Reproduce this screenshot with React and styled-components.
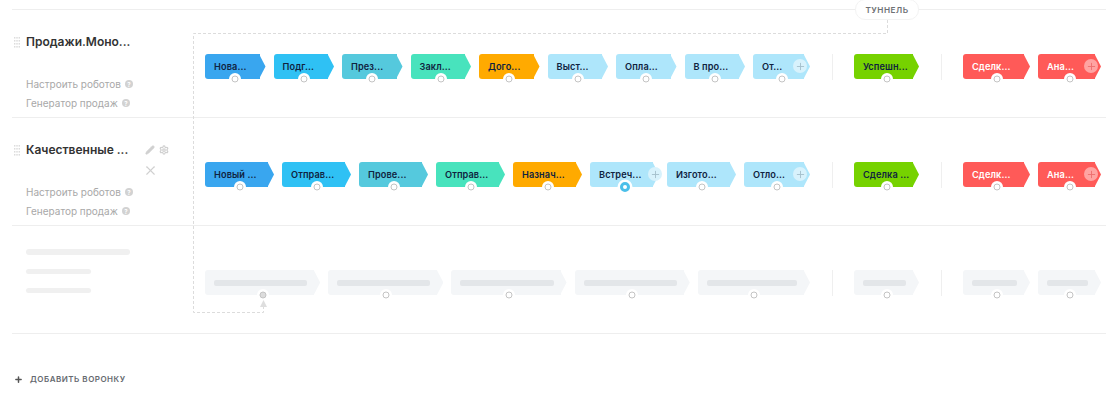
import React from 'react'
import styled, { createGlobalStyle } from 'styled-components'
import { Pencil, Plus, Settings, X } from 'lucide-react'

const GlobalStyle = createGlobalStyle`
  html, body {
    margin: 0;
    background: #fff;
    font-family: Inter, "Noto Sans", sans-serif;
  }
`

const colors = {
  blue: '#39a6ef',
  sky: '#2fc1f4',
  teal: '#55c9dd',
  mint: '#48e3bd',
  orange: '#ffaa00',
  light: '#aee6fb',
  green: '#76d200',
  red: '#ff5a58',
  ghost: '#f4f6f8'
}

const firstFunnel = {
  title: 'Продажи.Моно...',
  chipWidth: 60.5,
  stages: [
    { name: 'Нова...', color: 'blue' },
    { name: 'Подг...', color: 'sky' },
    { name: 'През...', color: 'teal' },
    { name: 'Закл...', color: 'mint' },
    { name: 'Дого...', color: 'orange' },
    { name: 'Выст...', color: 'light' },
    { name: 'Опла...', color: 'light' },
    { name: 'В про...', color: 'light' },
    { name: 'От...', color: 'light', plus: 10 }
  ],
  won: 'Успешн...',
  lost: ['Сделк...', 'Ана...']
}

const secondFunnel = {
  title: 'Качественные ...',
  editable: true,
  chipWidth: 69,
  stages: [
    { name: 'Новый ...', color: 'blue' },
    { name: 'Отправ...', color: 'sky' },
    { name: 'Прове...', color: 'teal' },
    { name: 'Отправ...', color: 'mint' },
    { name: 'Назнач...', color: 'orange' },
    { name: 'Встреч...', color: 'light', plus: 4, active: true },
    { name: 'Изгото...', color: 'light' },
    { name: 'Отло...', color: 'light', plus: 10 }
  ],
  won: 'Сделка ...',
  lost: ['Сделк...', 'Ана...']
}

const Page = styled.div`
  position: relative;
  width: 1110px;
  height: 402px;
  overflow: hidden;
  box-sizing: border-box;
  padding: 9px 4px 0 12px;
`

const Board = styled.div`
  border-top: 1px solid #eeeeee;
`

const Row = styled.div`
  display: flex;
  height: 107px;
  border-bottom: 1px solid #eeeeee;
`

const Sidebar = styled.div`
  width: 181px;
  flex-shrink: 0;
  box-sizing: border-box;
  padding: 24px 0 0 2px;
`

const Head = styled.div`
  display: flex;
  height: 40px;
`

const Title = styled.div`
  width: 117px;
  margin-left: 6px;
  flex-shrink: 0;
  font-size: 12px;
  line-height: 16px;
  font-weight: 600;
  color: #333;
  white-space: nowrap;
`

const Actions = styled.div`
  display: grid;
  grid-template-columns: 10px 10px;
  grid-template-rows: 10px 10px;
  gap: 11px 4px;
  margin: 3px 0 0 2px;
  color: #d0d0d0;
`

const CloseIcon = styled(X)`
  margin: -3px 0 0 -2px;
`

const Links = styled.div`
  padding-left: 12px;
`

const LinkRow = styled.div`
  display: flex;
  align-items: center;
  gap: 4px;
  height: 19px;
  font-size: 10px;
  color: #a8a8a8;
`

const Help = styled.span`
  display: flex;
  align-items: center;
  justify-content: center;
  width: 8px;
  height: 8px;
  margin-top: 1px;
  border-radius: 50%;
  background: #d2d2d2;
  color: #fff;
  font-size: 6px;
  font-weight: 700;
`

const Stages = styled.div`
  flex: 1;
  display: flex;
  box-sizing: border-box;
  padding: 44px 5px 0 12px;
`

const Group = styled.div`
  display: flex;
  gap: 8px;
  height: 25px;
  width: ${p => p.$width}px;
  flex-shrink: 0;
`

const Divider = styled.div`
  width: 1px;
  height: 26px;
  margin: 0 21px 0 22px;
  flex-shrink: 0;
  background: #efefef;
`

const Chip = styled.div`
  position: relative;
  box-sizing: border-box;
  flex: 0 0 ${p => p.$width}px;
  min-width: 0;
  display: flex;
  align-items: center;
  padding-left: 9px;
  font-size: 9.2px;
  font-weight: 600;
  letter-spacing: 0.1px;
  color: ${p => (p.$color === 'red' ? '#fff' : '#10233f')};
  white-space: nowrap;

  &:last-child {
    flex: 1 1 0;
  }

  &::before {
    content: '';
    position: absolute;
    inset: 0 6px 0 0;
    border-radius: 3px 0 0 3px;
    background: ${p => colors[p.$color]};
  }

  &::after {
    content: '';
    position: absolute;
    top: 0;
    bottom: 0;
    right: 0;
    width: 6.5px;
    background: ${p => colors[p.$color]};
    clip-path: polygon(0 0, 100% 50%, 0 100%);
  }
`

const ChipName = styled.span`
  position: relative;
  z-index: 1;
`

const Dot = styled.span`
  position: absolute;
  z-index: 2;
  left: 50%;
  bottom: 0;
  width: ${p => (p.$active ? 10 : 7)}px;
  height: ${p => (p.$active ? 10 : 7)}px;
  box-sizing: border-box;
  transform: translate(-50%, 50%);
  border-radius: 50%;
  border: ${p => (p.$active ? '3px solid #4bbfe9' : '1px solid #c4c4c4')};
  background: ${p => (p.$filled ? '#dcdcdc' : '#fff')};
  box-shadow: 0 0 0 2.5px #fff;
`

const AddStage = styled.span`
  position: absolute;
  z-index: 2;
  top: 5px;
  right: ${p => p.$right - 7}px;
  width: 14px;
  height: 14px;
  display: flex;
  align-items: center;
  justify-content: center;
  border-radius: 50%;
  background: ${p => (p.$red ? '#ffa3a2' : '#d8f2fc')};
  color: ${p => (p.$red ? '#ee6f6f' : '#a4bfcc')};
`

const GhostBar = styled.span`
  position: relative;
  z-index: 1;
  flex: 1;
  height: 6px;
  margin-right: 13px;
  border-radius: 2px;
  background: #e3e6e9;
`

const SideBar = styled.div`
  width: ${p => p.$width}px;
  height: ${p => (p.$wide ? 6 : 5)}px;
  margin: 0 0 14px 12px;
  border-radius: 3px;
  background: #f0f0f0;
`

const GhostSide = styled(Sidebar)`
  padding-top: 23px;
`

const AddFunnel = styled.div`
  display: flex;
  align-items: center;
  gap: 7px;
  margin: 39px 0 0 2px;
  height: 12px;
  font-size: 8px;
  font-weight: 600;
  letter-spacing: 0.5px;
  color: #666a70;
`

const TunnelLine = styled.svg`
  position: absolute;
  left: 0;
  top: 0;
  z-index: 3;
  pointer-events: none;
`

const TunnelBadge = styled.div`
  position: absolute;
  z-index: 4;
  left: 855px;
  top: -1px;
  width: 64px;
  height: 21px;
  box-sizing: border-box;
  display: flex;
  align-items: center;
  justify-content: center;
  border: 1px solid #f3f3f3;
  border-radius: 10px;
  background: #fff;
  font-size: 8.2px;
  font-weight: 600;
  letter-spacing: 0.5px;
  color: #6e7175;
`

const HandleIcon = styled.svg`
  margin-top: 3px;
  flex-shrink: 0;
`

const DragHandle = () => (
  <HandleIcon width="6" height="11" viewBox="0 0 6 11">
    {[0, 1, 2, 3].flatMap(r =>
      [0, 1, 2].map(c => (
        <rect key={`${r}${c}`} x={c * 2.3} y={r * 3} width="1.4" height="1.6" fill="#dcdcdc" />
      ))
    )}
  </HandleIcon>
)

const Stage = ({ name, color, width, plus, active }) => (
  <Chip $color={color} $width={width}>
    <ChipName>{name}</ChipName>
    {plus && (
      <AddStage $right={plus} $red={color === 'red'}>
        <Plus size={11} strokeWidth={2} />
      </AddStage>
    )}
    <Dot $active={active} />
  </Chip>
)

const Funnel = ({ funnel }) => (
  <Row>
    <Sidebar>
      <Head>
        <DragHandle />
        <Title>{funnel.title}</Title>
        {funnel.editable && (
          <Actions>
            <Pencil size={10} fill="currentColor" />
            <Settings size={10} strokeWidth={3} />
            <CloseIcon size={15} strokeWidth={1.8} />
          </Actions>
        )}
      </Head>
      <Links>
        <LinkRow>Настроить роботов <Help>?</Help></LinkRow>
        <LinkRow>Генератор продаж <Help>?</Help></LinkRow>
      </Links>
    </Sidebar>
    <Stages>
      <Group $width={605}>
        {funnel.stages.map((s, i) => (
          <Stage key={i} {...s} width={funnel.chipWidth} />
        ))}
      </Group>
      <Divider />
      <Group $width={65}>
        <Stage name={funnel.won} color="green" />
      </Group>
      <Divider />
      <Group $width={138}>
        <Stage name={funnel.lost[0]} color="red" width={67} />
        <Stage name={funnel.lost[1]} color="red" plus={10} />
      </Group>
    </Stages>
  </Row>
)

const GhostChip = ({ filled, width }) => (
  <Chip $color="ghost" $width={width}>
    <GhostBar />
    <Dot $filled={filled} />
  </Chip>
)

const GhostFunnel = () => (
  <Row>
    <GhostSide>
      <SideBar $width={104} $wide />
      <SideBar $width={65} />
      <SideBar $width={65} />
    </GhostSide>
    <Stages>
      <Group $width={605}>
        <GhostChip width={115.2} filled />
        <GhostChip width={115.2} />
        <GhostChip width={115.2} />
        <GhostChip width={115.2} />
        <GhostChip width={115.2} />
      </Group>
      <Divider />
      <Group $width={65}>
        <GhostChip />
      </Group>
      <Divider />
      <Group $width={138}>
        <GhostChip width={67} />
        <GhostChip />
      </Group>
    </Stages>
  </Row>
)

const App = () => (
  <Page>
    <GlobalStyle />
    <Board>
      <Funnel funnel={firstFunnel} />
      <Funnel funnel={secondFunnel} />
      <GhostFunnel />
    </Board>
    <AddFunnel>
      <Plus size={9} strokeWidth={4} color="#555" />
      ДОБАВИТЬ ВОРОНКУ
    </AddFunnel>
    <TunnelLine width="1110" height="402">
      <path
        d="M887.5 20V33.5H193.5V312.5H263.5V307"
        fill="none"
        stroke="#dcdcdc"
        strokeDasharray="3 2"
      />
      <path d="M263.5 300L267 307H260Z" fill="#dedede" />
    </TunnelLine>
    <TunnelBadge>ТУННЕЛЬ</TunnelBadge>
  </Page>
)

export default App
